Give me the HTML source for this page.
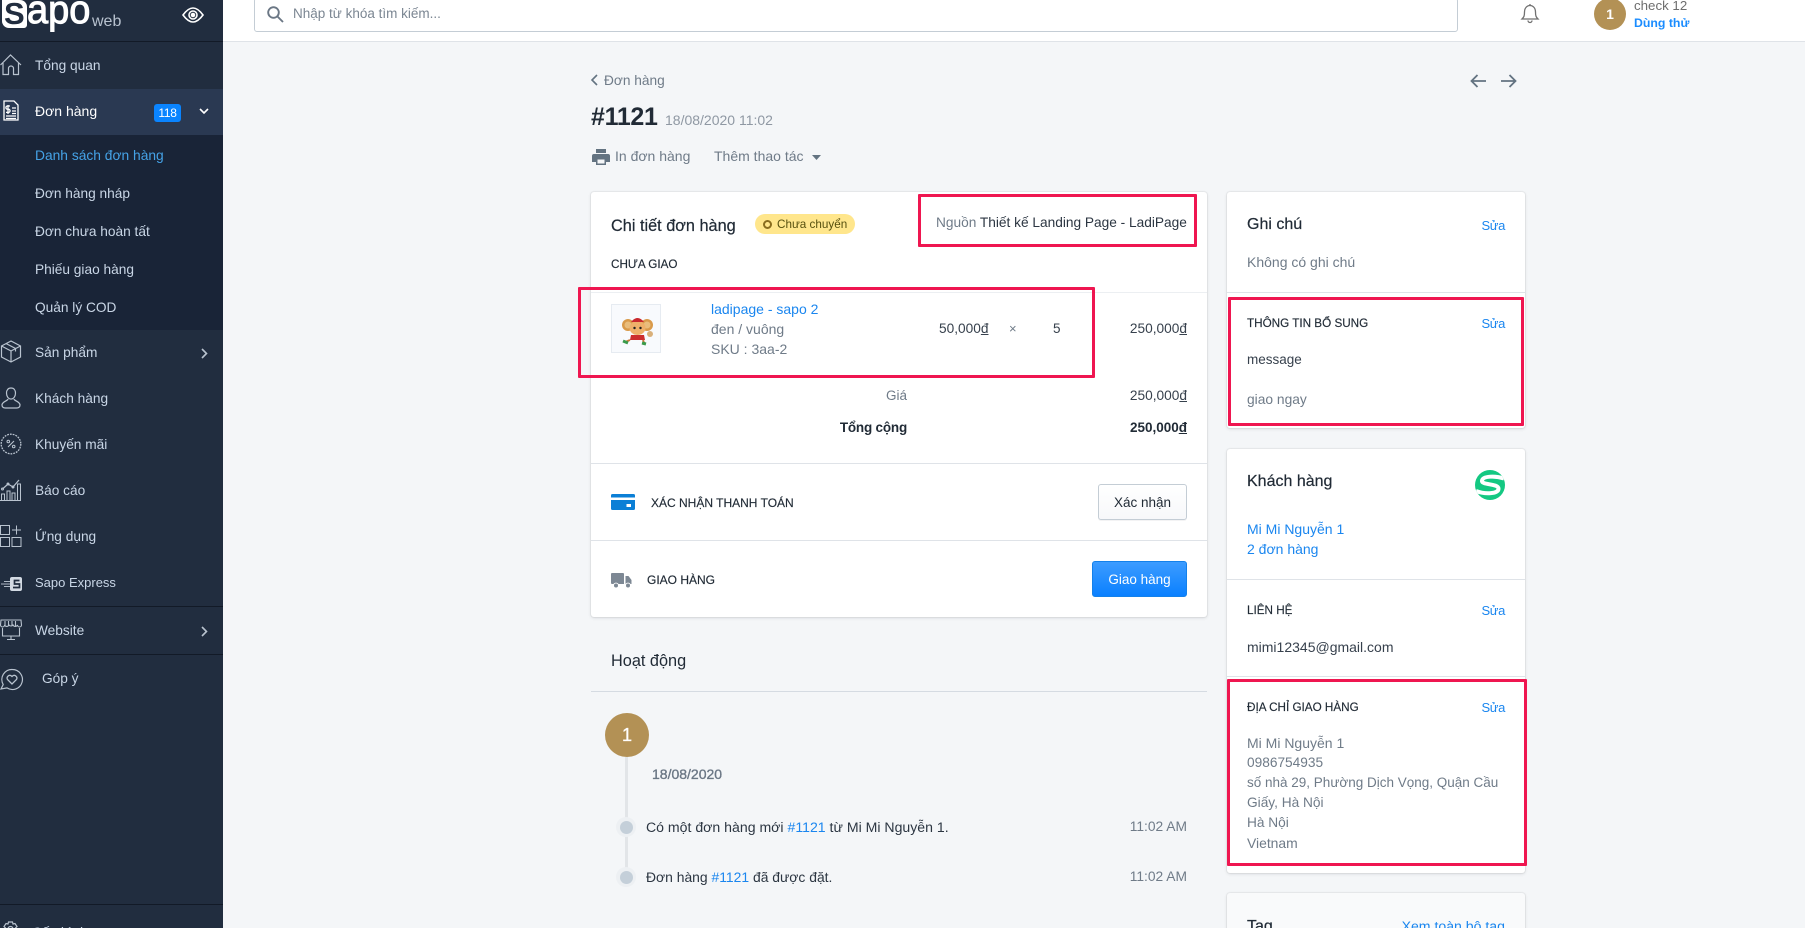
<!DOCTYPE html>
<html><head><meta charset="utf-8">
<style>
html,body{margin:0;padding:0;width:1805px;height:928px;overflow:hidden;background:#f4f6f8;font-family:"Liberation Sans","Noto Sans CJK SC",sans-serif;font-size:14px;color:#212b36}
#w{position:relative;width:1805px;height:928px;overflow:hidden;background:#f4f6f8}
.a{position:absolute}
.t{position:absolute;line-height:20px;height:20px;white-space:nowrap}
.n{color:#c9d6e6;font-size:13.7px;margin-top:1px}
.g{color:#6f7b88}
.l{color:#1a86ef}
.cap{font-size:11.7px;color:#212b36;-webkit-text-stroke:.15px #212b36}
.m .t{margin-top:1px}
.m .t.z{margin-top:0}
.card{position:absolute;background:#fff;border-radius:3px;box-shadow:0 0 0 1px rgba(63,63,68,.05),0 1px 3px rgba(63,63,68,.15)}
.hr{position:absolute;height:1px;background:#dfe3e8}
.red{position:absolute;border:3px solid #ef1650;box-sizing:border-box;border-radius:1px}
svg{position:absolute;overflow:visible}
.s{right:300px;font-size:13px;letter-spacing:-.35px}
</style></head><body><div id="w">

<!-- Sidebar -->
<div class="a" style="left:0;top:0;width:223px;height:928px;background:#212d3f"></div>
<div class="a" style="left:0;top:41px;width:223px;height:1px;background:#121a27"></div>
<div class="a" style="left:0;top:89px;width:223px;height:46px;background:#2a3952"></div>
<div class="a" style="left:0;top:135px;width:223px;height:195px;background:#192437"></div>
<div class="a" style="left:0;top:606px;width:223px;height:1px;background:#121a27"></div>
<div class="a" style="left:0;top:654px;width:223px;height:1px;background:#121a27"></div>
<div class="a" style="left:0;top:904px;width:223px;height:1px;background:#121a27"></div>

<!-- Logo -->
<div class="a" style="left:2px;top:0;width:25px;height:28px;background:#fff;border-radius:0 7px 3px 7px"></div>
<div class="t" style="left:4px;top:-2px;height:32px;line-height:32px;font-size:31px;font-weight:700;color:#212d3f">S</div>
<div class="t" style="left:27px;top:-10px;height:40px;line-height:40px;font-size:40px;color:#fff;-webkit-text-stroke:1px #fff;transform:scaleX(.95);transform-origin:0 0">apo</div>
<div class="t" style="left:92px;top:11.500px;font-size:16px;color:#b8c2cf">web</div>
<svg style="left:182px;top:7px" width="22" height="16" viewBox="0 0 22 16" fill="none" stroke="#fff" stroke-width="1.600"><path d="M1 8C5 2.500 8 1 11 1s6 1.500 10 7c-4 5.500-7 7-10 7S5 13.500 1 8Z"/><circle cx="11" cy="8" r="4"/><circle cx="11" cy="8" r="1.500" fill="#fff"/></svg>

<!-- Sidebar icons -->
<svg style="left:0;top:54px" width="22" height="22" viewBox="0 0 22 22" fill="none" stroke="#b9c3cf" stroke-width="1.200"><path d="M.5 11 10.500 1 21 11M3 9v11.500h5.500v-6a2.500 2.500 0 0 1 5 0v6H18.500V9"/></svg>
<svg style="left:3px;top:100px" width="16" height="21" viewBox="0 0 16 21" fill="none" stroke="#fff" stroke-width="1.300"><path d="M1 1h10l4 4v15H1Z"/><path d="M3 16h10M3 18.500h10M9 8h4M9 11h4M9 13.500h4"/><path d="M7 6H4.500a1.300 1.300 0 0 0 0 3.200h1a1.300 1.300 0 0 1 0 3.200H3M5 5v9"/></svg>
<svg style="left:0;top:340px" width="22" height="23" viewBox="0 0 22 23" fill="none" stroke="#b9c3cf" stroke-width="1.200"><path d="M11 1l9.500 5v11L11 22 1.500 17V6Z"/><path d="M1.500 6 11 11l9.500-5M11 11v11M6 3.500l9.500 5v3"/></svg>
<svg style="left:1px;top:387px" width="20" height="22" viewBox="0 0 20 22" fill="none" stroke="#b9c3cf" stroke-width="1.200"><path d="M10 1c3 0 4.500 2.200 4.500 5s-1.500 6-4.500 6-4.500-3.200-4.500-6S7 1 10 1Z"/><path d="M7 12c-.3 2-6 2.500-6 6 0 2 1.500 3 3.500 3h11c2 0 3.500-1 3.500-3 0-3.500-5.700-4-6-6"/></svg>
<svg style="left:0;top:433px" width="22" height="22" viewBox="0 0 22 22" fill="none" stroke="#b9c3cf"><circle cx="11" cy="11" r="9.800" stroke-width="1.300" stroke-dasharray="1.800 1"/><path d="M14 8l-6 6" stroke-width="1.100"/><circle cx="8.300" cy="8.500" r="1.300"/><circle cx="13.700" cy="13.500" r="1.300"/></svg>
<svg style="left:0;top:478px" width="22" height="23" viewBox="0 0 22 23" fill="none" stroke="#b9c3cf" stroke-width="1"><path d="M0 22.500h21M1.500 22v-6h3v6M7 22v-9h3v9M12 22v-7h3v7M17.500 22V6h3v16"/><path d="M2.500 11 8 6l5 3 6-7" stroke-width="1.200"/><circle cx="2.500" cy="11" r="1"/><circle cx="8" cy="6" r="1"/><circle cx="13" cy="9" r="1"/></svg>
<svg style="left:0;top:525px" width="22" height="22" viewBox="0 0 22 22" fill="none" stroke="#b9c3cf" stroke-width="1"><rect x=".5" y=".5" width="9" height="9"/><rect x=".5" y="12.500" width="9" height="9"/><rect x="12" y="12.500" width="9" height="9"/><path d="M16.500.5v9M12 5h9"/></svg>
<svg style="left:1px;top:577px" width="21" height="14" viewBox="0 0 21 14" fill="none"><rect x="9" y="0" width="12" height="14" rx="2" fill="#d3dae3"/><path d="M18.500 3.500H13.500v3.500h5v3.500H12" stroke="#212d3f" stroke-width="1.700"/><path d="M3 4.500h6M0 7h9M3 9.500h6" stroke="#aeb8c4" stroke-width="1"/></svg>
<svg style="left:0;top:619px" width="22" height="22" viewBox="0 0 22 22" fill="none" stroke="#b9c3cf" stroke-width="1.100"><path d="M1 1h20l.5 5a2 2 0 0 1-4 0 2.500 2.500 0 0 1-4.500 0 2.500 2.500 0 0 1-4 0 2.500 2.500 0 0 1-4.500 0 2 2 0 0 1-4 0Z"/><path d="M5 2v5M8.500 2v5M12 2v5M15.500 2v5M2.500 9v8h17V9M11 17v3M7 20.500h8"/></svg>
<svg style="left:0;top:668px" width="24" height="23" viewBox="0 0 24 23" fill="none" stroke="#b9c3cf" stroke-width="1.200"><path d="M12.500 1.500a10 10 0 1 1-5.500 18.400L1 21l2.200-4.500A10 10 0 0 1 12.500 1.500Z"/><path d="M12 16l-4.500-4.500a2.700 2.700 0 0 1 4-3.500l.5.500.5-.5a2.700 2.700 0 0 1 4 3.500Z" stroke-width="1.300"/></svg>
<svg style="left:2px;top:921px" width="17" height="17" viewBox="0 0 17 17" fill="none" stroke="#b9c3cf" stroke-width="1.200"><path d="M6.500 1h4l.5 2 2-.5 2 3-1.500 1.500v2L15 10.500l-2 3-2-.5-.5 2h-4L6 13l-2 .5-2-3L3.500 9V7L2 5.500l2-3 2 .5Z"/><circle cx="8.500" cy="8" r="2.500"/></svg>

<!-- Sidebar text -->
<div class="t n" style="left:35px;top:55px">Tổng quan</div>
<div class="t" style="left:35px;top:101px;color:#fff">Đơn hàng</div>
<div class="a" style="left:154px;top:104px;width:27px;height:18px;background:#0a84ff;border-radius:3px;color:#fff;font-size:12px;line-height:18px;text-align:center;letter-spacing:-.3px">118</div>
<svg style="left:199px;top:108px" width="10" height="7" viewBox="0 0 10 7" fill="none" stroke="#fff" stroke-width="1.600"><path d="M1 1l4 4 4-4"/></svg>
<div class="t" style="left:35px;top:146px;color:#45a2e6;font-size:13.800px">Danh sách đơn hàng</div>
<div class="t n" style="left:35px;top:183px">Đơn hàng nháp</div>
<div class="t n" style="left:35px;top:221px">Đơn chưa hoàn tất</div>
<div class="t n" style="left:35px;top:259px">Phiếu giao hàng</div>
<div class="t n" style="left:35px;top:297px">Quản lý COD</div>
<div class="t n" style="left:35px;top:342px">Sản phẩm</div>
<svg style="left:201px;top:348px" width="7" height="11" viewBox="0 0 7 11" fill="none" stroke="#b9c3cf" stroke-width="1.600"><path d="M1 1l4.500 4.500L1 10"/></svg>
<div class="t n" style="left:35px;top:388px">Khách hàng</div>
<div class="t n" style="left:35px;top:434px">Khuyến mãi</div>
<div class="t n" style="left:35px;top:480px">Báo cáo</div>
<div class="t n" style="left:35px;top:526px">Ứng dụng</div>
<div class="t n" style="left:35px;top:572px;font-size:13px">Sapo Express</div>
<div class="t n" style="left:35px;top:620px">Website</div>
<svg style="left:201px;top:626px" width="7" height="11" viewBox="0 0 7 11" fill="none" stroke="#b9c3cf" stroke-width="1.600"><path d="M1 1l4.500 4.500L1 10"/></svg>
<div class="t n" style="left:42px;top:668px">Góp ý</div>
<div class="t n" style="left:32px;top:922px">Cấu hình</div>

<!-- Topbar -->
<div class="a" style="left:223px;top:0;width:1582px;height:41px;background:#fff;border-bottom:1px solid #dfe3e8"></div>
<div class="a" style="left:254px;top:-2px;width:1204px;height:34px;box-sizing:border-box;background:#fff;border:1px solid #c4cdd5;border-radius:3px"></div>
<svg style="left:267px;top:6px" width="17" height="17" viewBox="0 0 17 17" fill="none" stroke="#6b7785" stroke-width="1.900"><circle cx="6.500" cy="6.500" r="5.300"/><path d="M10.500 10.500 16 16"/></svg>
<div class="t" style="left:293px;top:4px;color:#7b8692;font-size:13.500px">Nhập từ khóa tìm kiếm...</div>
<svg style="left:1521px;top:3px" width="18" height="20" viewBox="0 0 18 20" fill="none" stroke="#707070" stroke-width="1.300"><path d="M1 16c2-2 2.500-3 2.500-7C3.500 5 6 2.500 9 2.500S14.500 5 14.500 9c0 4 .5 5 2.500 7Z"/><path d="M9 1v1.500M7 17.500a2 2 0 0 0 4 0"/></svg>
<div class="a" style="left:1594px;top:-2px;width:32px;height:32px;border-radius:50%;background:#b39155;color:#fff;font-size:14px;font-weight:700;line-height:32px;text-align:center">1</div>
<div class="t" style="left:1634px;top:-4px;font-size:13.300px;color:#6e6e6e">check 12</div>
<div class="t" style="left:1634px;top:13px;font-size:12.300px;font-weight:700;color:#1a8cff">Dùng thử</div>

<div class="m">
<!-- Page head -->
<svg style="left:590px;top:74px" width="8" height="12" viewBox="0 0 8 12" fill="none" stroke="#637381" stroke-width="1.600"><path d="M7 1 2 6l5 5"/></svg>
<div class="t g" style="left:604px;top:70px;font-size:13.700px">Đơn hàng</div>
<div class="t" style="left:591px;top:102px;height:28px;line-height:28px;font-size:25px;font-weight:700;color:#212b36;letter-spacing:-.3px">#1121</div>
<div class="t z" style="left:665px;top:110px;font-size:14px;color:#8f98a3">18/08/2020 11:02</div>
<svg style="left:592px;top:149px" width="18" height="16" viewBox="0 0 18 16"><path d="M4 0h10v4H4ZM2 5h14a2 2 0 0 1 2 2v6h-4v3H4v-3H0V7a2 2 0 0 1 2-2Z" fill="#637381"/><rect x="5.500" y="10.500" width="7" height="4" fill="#f4f6f8"/></svg>
<div class="t g z" style="left:615px;top:146px;font-size:14px">In đơn hàng</div>
<div class="t g z" style="left:714px;top:146px;font-size:14px">Thêm thao tác</div>
<svg style="left:812px;top:155px" width="9" height="5"><path d="M0 0h9L4.500 5Z" fill="#637381"/></svg>
<svg style="left:1470px;top:74px" width="16" height="14" viewBox="0 0 16 14" fill="none" stroke="#637381" stroke-width="1.800"><path d="M16 7H1.500M7.500 1l-6 6 6 6"/></svg>
<svg style="left:1501px;top:74px" width="16" height="14" viewBox="0 0 16 14" fill="none" stroke="#637381" stroke-width="1.800"><path d="M0 7h14.500M8.500 1l6 6-6 6"/></svg>

<!-- Main card -->
<div class="card" style="left:591px;top:192px;width:616px;height:425px"></div>
<div class="t" style="left:611px;top:215px;font-size:16.300px;color:#212b36;-webkit-text-stroke:.2px #212b36">Chi tiết đơn hàng</div>
<div class="a" style="left:755px;top:214px;width:100px;height:20px;background:#ffe68c;border-radius:10px"></div>
<div class="a" style="left:763px;top:220px;width:9px;height:9px;box-sizing:border-box;border:2px solid #8a6d1f;border-radius:50%"></div>
<div class="t" style="left:777px;top:214px;font-size:11.700px;color:#57500f">Chưa chuyển</div>
<div class="t" style="left:936px;top:212px;font-size:13.700px"><span class="g">Nguồn</span> <span style="color:#2c3642">Thiết kế Landing Page - LadiPage</span></div>
<div class="t cap" style="left:611px;top:254px">CHƯA GIAO</div>
<div class="hr" style="left:591px;top:292px;width:616px;background:#eceff2"></div>

<div class="a" style="left:611px;top:304px;width:50px;height:49px;box-sizing:border-box;border:1px solid #e6ebf1;background:#f8fafd"></div>
<svg style="left:611px;top:304px" width="50" height="49" viewBox="0 0 50 49">
<circle cx="17" cy="21" r="6" fill="#d99a4a"/><circle cx="36" cy="21" r="6" fill="#d99a4a"/>
<circle cx="17" cy="21" r="3.500" fill="#e9bd7c"/><circle cx="36" cy="21" r="3.500" fill="#e9bd7c"/>
<ellipse cx="26.500" cy="24" rx="8" ry="7" fill="#eeb06a"/><path d="M20 18q6.500-8 13 0z" fill="#c9282d"/>
<path d="M20 31h13l1 5H19Z" fill="#cc2e2e"/><circle cx="39" cy="30" r="3" fill="#d9b07a"/>
<path d="M19 36l-5 2M32 36l1 3" stroke="#cc7a3a" stroke-width="2"/>
<path d="M12 37l5 2M31 39l4 1" stroke="#3b9a4a" stroke-width="3"/>
<circle cx="23.500" cy="24" r="1.200" fill="#222"/><circle cx="29.500" cy="24" r="1.200" fill="#222"/></svg>

<div class="t l z" style="left:711px;top:299px;font-size:14px">ladipage - sapo 2</div>
<div class="t g z" style="left:711px;top:319px;font-size:14px">đen / vuông</div>
<div class="t g z" style="left:711px;top:339px;font-size:14px">SKU : 3aa-2</div>
<div class="t z" style="left:939px;top:319px;font-size:13.700px;color:#37414d">50,000<u>đ</u></div>
<div class="t g z" style="left:1009px;top:319px;font-size:13px">×</div>
<div class="t z" style="left:1053px;top:319px;font-size:13.500px;color:#37414d">5</div>
<div class="t z" style="right:618px;top:319px;font-size:13.700px;color:#37414d">250,000<u>đ</u></div>
<div class="t g" style="right:898px;top:385px;font-size:13.500px">Giá</div>
<div class="t" style="right:618px;top:385px;font-size:13.700px;color:#37414d">250,000<u>đ</u></div>
<div class="t" style="right:898px;top:417px;font-size:13.500px;font-weight:700;color:#212b36;letter-spacing:-.2px">Tổng cộng</div>
<div class="t" style="right:618px;top:417px;font-size:13.500px;font-weight:700;color:#212b36">250,000<u>đ</u></div>
<div class="hr" style="left:591px;top:463px;width:616px"></div>

<svg style="left:611px;top:494px" width="24" height="16" viewBox="0 0 24 16"><rect width="24" height="16" rx="1.500" fill="#0b7fd6"/><rect y="3.500" width="24" height="2.500" fill="#fff"/><rect x="15.500" y="10" width="4.500" height="3" fill="#fff"/></svg>
<div class="t cap" style="left:651px;top:492px;font-size:12px">XÁC NHẬN THANH TOÁN</div>
<div class="a" style="left:1098px;top:484px;width:89px;height:36px;box-sizing:border-box;border:1px solid #c4cdd5;border-radius:3px;background:linear-gradient(#fff,#f7f8fa);box-shadow:0 1px 0 rgba(22,29,37,.05);text-align:center;line-height:36px;font-size:13.500px;color:#212b36">Xác nhận</div>
<div class="hr" style="left:591px;top:540px;width:616px"></div>

<svg style="left:611px;top:573px" width="21" height="15" viewBox="0 0 21 15"><path d="M0 1a1 1 0 0 1 1-1h11a1 1 0 0 1 1 1v10H7.500a3 3 0 0 0-5 0H1a1 1 0 0 1-1-1Z" fill="#7d8894"/><path d="M14.500 3h3l3 4v4h-1a3 3 0 0 0-5 0Z" fill="#7d8894"/><circle cx="5" cy="12.500" r="2" fill="#7d8894"/><circle cx="17" cy="12.500" r="2" fill="#7d8894"/></svg>
<div class="t cap" style="left:647px;top:569px;font-size:12px">GIAO HÀNG</div>
<div class="a" style="left:1092px;top:561px;width:95px;height:36px;box-sizing:border-box;border:1px solid #1481ea;border-radius:3px;background:linear-gradient(#3d9cff,#0a80ff);text-align:center;line-height:36px;font-size:13.500px;color:#fff">Giao hàng</div>

<!-- Activity -->
<div class="t" style="left:611px;top:650px;font-size:16.300px;color:#212b36">Hoạt động</div>
<div class="hr" style="left:591px;top:691px;width:616px;background:#d5dbe2"></div>
<div class="a" style="left:625px;top:757px;width:3px;height:120px;background:#e2e5e8"></div>
<div class="a" style="left:605px;top:713px;width:44px;height:44px;border-radius:50%;background:#b39155;color:#fff;font-size:18px;line-height:44px;text-align:center;-webkit-text-stroke:.3px #fff">1</div>
<div class="t z" style="left:652px;top:764px;font-size:14px;color:#6b7785;-webkit-text-stroke:.35px #6b7785">18/08/2020</div>
<div class="a" style="left:616px;top:817px;width:20px;height:20px;border-radius:50%;background:#edf0f3"></div>
<div class="a" style="left:619.500px;top:820.500px;width:13px;height:13px;border-radius:50%;background:#c4cfd9"></div>
<div class="a" style="left:616px;top:867px;width:20px;height:20px;border-radius:50%;background:#edf0f3"></div>
<div class="a" style="left:619.500px;top:870.500px;width:13px;height:13px;border-radius:50%;background:#c4cfd9"></div>
<div class="t z" style="left:646px;top:817px;font-size:14.100px;color:#2c3642">Có một đơn hàng mới <span class="l">#1121</span> từ Mi Mi Nguyễn 1.</div>
<div class="t z" style="left:646px;top:867px;font-size:13.900px;color:#2c3642">Đơn hàng <span class="l">#1121</span> đã được đặt.</div>
<div class="t g z" style="right:618px;top:817px;font-size:13.800px">11:02 AM</div>
<div class="t g z" style="right:618px;top:867px;font-size:13.800px">11:02 AM</div>

<!-- Right card 1 -->
<div class="card" style="left:1227px;top:192px;width:298px;height:236px"></div>
<div class="t" style="left:1247px;top:214px;font-size:16px;color:#212b36;-webkit-text-stroke:.2px #212b36">Ghi chú</div>
<div class="t l s" style="top:215px">Sửa</div>
<div class="t g z" style="left:1247px;top:252px;font-size:14px">Không có ghi chú</div>
<div class="hr" style="left:1227px;top:292px;width:298px"></div>
<div class="t cap" style="left:1247px;top:313px">THÔNG TIN BỔ SUNG</div>
<div class="t l s" style="top:313px">Sửa</div>
<div class="t z" style="left:1247px;top:350px;font-size:13.500px;color:#37414d">message</div>
<div class="t g z" style="left:1247px;top:389.500px;font-size:13.800px">giao ngay</div>

<!-- Right card 2 -->
<div class="card" style="left:1227px;top:449px;width:298px;height:424px"></div>
<div class="t" style="left:1247px;top:471px;font-size:16px;color:#212b36;-webkit-text-stroke:.2px #212b36">Khách hàng</div>
<svg style="left:1475px;top:470px" width="30" height="30" viewBox="0 0 30 30"><defs><clipPath id="c"><circle cx="15" cy="15" r="15"/></clipPath></defs><circle cx="15" cy="15" r="15" fill="#14c882"/><path clip-path="url(#c)" d="M29 8.500C20 5.500 8 6 7 10.500 6 15.500 23 13 23.500 18.500 24 24 10 24.500 1 21" fill="none" stroke="#fff" stroke-width="4"/></svg>
<div class="t l z" style="left:1247px;top:519px;font-size:14px">Mi Mi Nguyễn 1</div>
<div class="t l z" style="left:1247px;top:539px;font-size:14px">2 đơn hàng</div>
<div class="hr" style="left:1227px;top:579px;width:298px"></div>
<div class="t cap" style="left:1247px;top:600px">LIÊN HỆ</div>
<div class="t l s" style="top:600px">Sửa</div>
<div class="t z" style="left:1247px;top:637px;font-size:14px;color:#37414d">mimi12345@gmail.com</div>
<div class="hr" style="left:1227px;top:676px;width:298px"></div>
<div class="t cap" style="left:1247px;top:697px">ĐỊA CHỈ GIAO HÀNG</div>
<div class="t l s" style="top:697px">Sửa</div>
<div class="t g z" style="left:1247px;top:733px;font-size:14px">Mi Mi Nguyễn 1</div>
<div class="t g z" style="left:1247px;top:753px;font-size:13.700px">0986754935</div>
<div class="t g z" style="left:1247px;top:773px;font-size:13.500px">số nhà 29, Phường Dịch Vọng, Quận Cầu</div>
<div class="t g z" style="left:1247px;top:793px;font-size:13.700px">Giấy, Hà Nội</div>
<div class="t g z" style="left:1247px;top:813px;font-size:13.700px">Hà Nội</div>
<div class="t g z" style="left:1247px;top:833px;font-size:13.900px">Vietnam</div>

<!-- Right card 3 -->
<div class="card" style="left:1227px;top:893px;width:298px;height:80px;background:#f9fafb"></div>
<div class="t" style="left:1247px;top:916px;font-size:16px;color:#212b36;-webkit-text-stroke:.2px #212b36">Tag</div>
<div class="t l" style="right:300px;top:915px;font-size:14.100px">Xem toàn bộ tag</div>
</div>

<!-- Red annotation boxes -->
<div class="red" style="left:918px;top:194px;width:279px;height:53px"></div>
<div class="red" style="left:578px;top:287px;width:517px;height:91px"></div>
<div class="red" style="left:1228px;top:297px;width:296px;height:129px"></div>
<div class="red" style="left:1227px;top:679px;width:300px;height:187px"></div>

</div></body></html>
